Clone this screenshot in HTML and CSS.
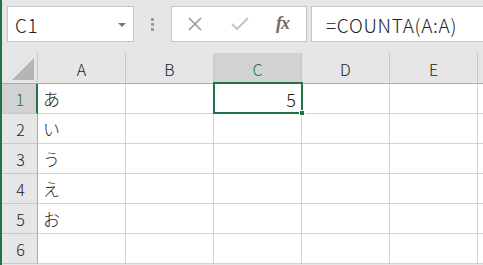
FILE: index.html
```html
<!DOCTYPE html>
<html lang="ja">
<head>
<meta charset="utf-8">
<link rel="stylesheet" href="styles.css">
</head>
<body>
<div class="app">
  <div class="toolbar">
    <div class="namebox">
      <span class="name">C1</span>
      <svg class="caret" width="8" height="4" viewBox="0 0 8 4"><path d="M0 0H8L4 4Z" fill="#777"/></svg>
    </div>
    <div class="dots"><i></i><i></i><i></i></div>
    <div class="fbtns">
      <svg class="ico-x" width="16" height="14" viewBox="0 0 16 14"><path d="M2 1L14 13M14 1L2 13" stroke="#9a9a9a" stroke-width="1.6" fill="none"/></svg>
      <svg class="ico-ok" width="18" height="14" viewBox="0 0 18 14"><path d="M1 7L6 12L17 1" stroke="#c4c4c4" stroke-width="2.2" fill="none"/></svg>
      <span class="fx">fx</span>
    </div>
    <div class="formula">=COUNTA(A:A)</div>
  </div>
  <div class="sheet">
    <div class="corner"><svg width="22" height="22" viewBox="0 0 22 22"><path d="M22 0V22H0Z" fill="#b5b5b5"/></svg></div>
    <div class="ch">A</div><div class="ch">B</div><div class="ch sel">C</div><div class="ch">D</div><div class="ch">E</div><div class="ch stub"></div>

    <div class="rh sel">1</div><div class="c">あ</div><div class="c"></div><div class="c num active">5<span class="selbox"><span class="handle"></span></span></div><div class="c"></div><div class="c"></div><div class="c stub"></div>
    <div class="rh">2</div><div class="c">い</div><div class="c"></div><div class="c"></div><div class="c"></div><div class="c"></div><div class="c stub"></div>
    <div class="rh">3</div><div class="c">う</div><div class="c"></div><div class="c"></div><div class="c"></div><div class="c"></div><div class="c stub"></div>
    <div class="rh">4</div><div class="c">え</div><div class="c"></div><div class="c"></div><div class="c"></div><div class="c"></div><div class="c stub"></div>
    <div class="rh">5</div><div class="c">お</div><div class="c"></div><div class="c"></div><div class="c"></div><div class="c"></div><div class="c stub"></div>
    <div class="rh">6</div><div class="c"></div><div class="c"></div><div class="c"></div><div class="c"></div><div class="c"></div><div class="c stub"></div>
  </div>
</div>
</body>
</html>
```

FILE: styles.css
```css
* { box-sizing: border-box; }
html, body { margin: 0; padding: 0; }
body {
  width: 483px; height: 265px; overflow: hidden;
  background: #e6e6e6;
  font-family: "Noto Sans CJK JP", "Noto Sans", sans-serif;
}
.app {
  border-left: 2px solid #217346;
  height: 265px;
}
.toolbar {
  height: 53px;
  display: flex;
  align-items: flex-start;
  padding-top: 6px;
  padding-left: 5px;
}
.namebox {
  width: 127px; height: 36px;
  background: #fff;
  border: 1px solid #c6c6c6;
  display: flex; align-items: center; justify-content: space-between;
  padding: 0 7px 0 7px;
}
.name { font-size: 19px; font-weight: 300; color: #222; line-height: 1; letter-spacing: 0.5px; }
.caret { margin-top: 1px; }
.dots {
  width: 37px; height: 36px;
  display: flex; flex-direction: column; align-items: center; justify-content: center; gap: 2px;
}
.dots i { display: block; width: 3px; height: 3px; background: #9e9e9e; }
.fbtns {
  width: 136px; height: 36px;
  background: #fff; border: 1px solid #c6c6c6;
  display: flex; align-items: center;
  padding-left: 15px;
}
.ico-x { margin-right: 28px; }
.ico-ok { margin-right: 27px; }
.fx {
  font-family: "Liberation Serif", serif;
  font-style: italic; font-weight: bold;
  font-size: 18px; color: #6a6a6a;
  letter-spacing: -1px;
  margin-top: -2px;
}
.formula {
  margin-left: 4px;
  flex: 1; height: 36px;
  background: #fff; border: 1px solid #c6c6c6; border-right: none;
  font-size: 19px; font-weight: 300; color: #222;
  letter-spacing: 0.7px;
  padding-left: 14px;
  padding-top: 1px;
  display: flex; align-items: center;
}
.sheet {
  display: grid;
  grid-template-columns: 36px 88px 88px 88px 88px 88px 20px;
  grid-template-rows: 31px repeat(6, 30px);
  background: #fff;
}
.corner, .ch, .rh {
  background: #e6e6e6;
  color: #222;
  font-size: 16px;
  font-weight: 300;
  display: flex; align-items: center; justify-content: center;
}
.corner {
  border-right: 1px solid #c8c8c8;
  border-bottom: 1px solid #ababab;
  align-items: flex-end; justify-content: flex-end;
  padding: 0 3px 3px 0;
}
.ch {
  border-right: 1px solid #c8c8c8;
  border-bottom: 1px solid #ababab;
  padding-top: 2px;
}
.ch.stub { border-right: none; }
.ch.sel {
  background: #d2d2d2; color: #217346;
  border-bottom: 2px solid #217346;
}
.rh {
  border-right: 1px solid #ababab;
  border-bottom: 1px solid #c8c8c8;
  padding-left: 2px;
}
.rh.sel {
  background: #d2d2d2; color: #217346;
  border-right: 2px solid #217346;
}
.c {
  border-right: 1px solid #d4d4d4;
  border-bottom: 1px solid #d4d4d4;
  font-size: 17px; font-weight: 300; color: #222;
  display: flex; align-items: center;
  padding-left: 5px;
}
.c.stub { border-right: none; }
.c.num { justify-content: flex-end; padding-right: 5px; font-size: 18px; }
.c.active { position: relative; }
.selbox {
  position: absolute;
  top: -2px; left: -1px; width: 90px; height: 32px;
  border: 2px solid #217346;
}
.handle {
  position: absolute;
  right: -4px; bottom: -4px;
  width: 6px; height: 6px;
  background: #217346;
  border: 1px solid #fff;
}
```
